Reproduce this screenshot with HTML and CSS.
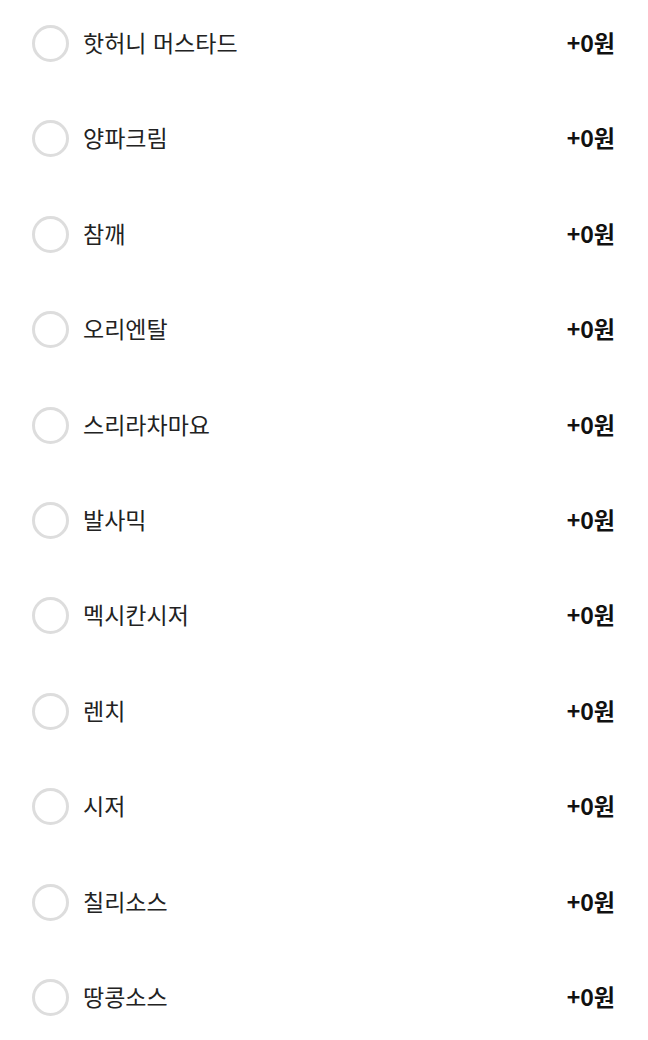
FILE: index.html
```html
<!DOCTYPE html>
<html lang="ko">
<head>
    <meta charset="UTF-8">
    <meta name="viewport" content="width=device-width, initial-scale=1.0">
    <title>소스 선택</title>
    <link rel="stylesheet" href="styles.css">
</head>
<body>
    <ul class="option-list">
        <li class="option"><span class="radio"></span><span class="label">핫허니 머스타드</span><span class="price">+0원</span></li>
        <li class="option"><span class="radio"></span><span class="label">양파크림</span><span class="price">+0원</span></li>
        <li class="option"><span class="radio"></span><span class="label">참깨</span><span class="price">+0원</span></li>
        <li class="option"><span class="radio"></span><span class="label">오리엔탈</span><span class="price">+0원</span></li>
        <li class="option"><span class="radio"></span><span class="label">스리라차마요</span><span class="price">+0원</span></li>
        <li class="option"><span class="radio"></span><span class="label">발사믹</span><span class="price">+0원</span></li>
        <li class="option"><span class="radio"></span><span class="label">멕시칸시저</span><span class="price">+0원</span></li>
        <li class="option"><span class="radio"></span><span class="label">렌치</span><span class="price">+0원</span></li>
        <li class="option"><span class="radio"></span><span class="label">시저</span><span class="price">+0원</span></li>
        <li class="option"><span class="radio"></span><span class="label">칠리소스</span><span class="price">+0원</span></li>
        <li class="option"><span class="radio"></span><span class="label">땅콩소스</span><span class="price">+0원</span></li>
    </ul>
</body>
</html>
```

FILE: styles.css
```css
/* Dasar halaman */
body {
    margin: 0;
    background: #fff;
    color: #222;
    font-family: "Noto Sans CJK KR", "Noto Sans", sans-serif;
}

/* Daftar opsi */
.option-list {
    list-style: none;
    margin: 0;
    padding: 25px 33px 0 32px;
}

.option {
    display: flex;
    align-items: center;
    height: 37px;
    margin-bottom: 58.4px;
}

.radio {
    width: 37px;
    height: 37px;
    box-sizing: border-box;
    border: 3px solid #ddd;
    border-radius: 50%;
    flex-shrink: 0;
}

.label {
    margin-left: 14px;
    font-size: 23px;
    line-height: 1;
    margin-top: -2px;
}

.price {
    margin-left: auto;
    font-size: 23px;
    font-weight: 700;
    line-height: 1;
    margin-top: -2px;
    color: #111;
}
```
